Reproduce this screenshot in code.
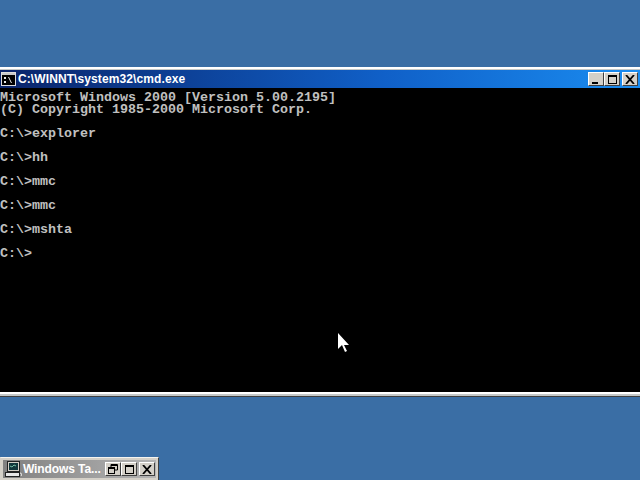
<script lang="ts">
  const lines = [
    'Microsoft Windows 2000 [Version 5.00.2195]',
    '(C) Copyright 1985-2000 Microsoft Corp.',
    '',
    'C:\\>explorer',
    '',
    'C:\\>hh',
    '',
    'C:\\>mmc',
    '',
    'C:\\>mmc',
    '',
    'C:\\>mshta',
    '',
    'C:\\>',
  ];
</script>

<div class="desktop">
  <section class="window">
    <header class="title">
      <svg class="cmd-icon" width="15" height="14" viewBox="0 0 15 14">
        <rect x="0.5" y="0.5" width="14" height="13" fill="#000" stroke="#dcdcdc" />
        <rect x="1" y="1" width="13" height="2" fill="#c8c8c8" />
        <path d="M3 5h2v2H3zM3 9h2v2H3zM7 5l1 0 3 6h-1z" fill="#e8e8e8" />
      </svg>
      <span class="caption">C:\WINNT\system32\cmd.exe</span>
      <div class="controls">
        <button class="btn" aria-label="Minimize"><i class="min"></i></button>
        <button class="btn" aria-label="Maximize"><i class="max"></i></button>
        <button class="btn gap" aria-label="Close">
          <svg width="10" height="9" viewBox="0 0 10 9"><path d="M1 0l8 9M9 0l-8 9" stroke="#000" stroke-width="1.8" /></svg>
        </button>
      </div>
    </header>
    <pre class="console">{lines.join('\n')}</pre>
    <div class="cursor">
      <svg width="11" height="19" viewBox="0 0 11 19">
        <path d="M0 0v16l4-4 3 7 2-1-3-6h5z" fill="#fff" />
      </svg>
    </div>
  </section>

  <div class="task">
    <div class="task-title">
      <svg class="task-icon" width="17" height="16" viewBox="0 0 17 16">
        <rect x="2.5" y="0.5" width="12" height="10" fill="#d4d0c8" stroke="#222" />
        <rect x="4" y="2" width="9" height="7" fill="#12383c" />
        <path d="M5 5l2 1 2-2 2 1" fill="none" stroke="#8fe0c0" stroke-width="0.8" />
        <rect x="0.5" y="11.5" width="14" height="4" fill="#e8e8e8" stroke="#222" />
        <path d="M15 12c2 0 2 2 1 3" fill="none" stroke="#eee" />
      </svg>
      <span class="task-label">Windows Ta...</span>
      <div class="task-controls">
        <button class="btn" aria-label="Restore">
          <svg width="10" height="10" viewBox="0 0 10 10">
            <path d="M3 3V.5h6.5V6H7M3 1.5h6" fill="none" stroke="#000" />
            <rect x="0.5" y="3.5" width="6" height="6" fill="none" stroke="#000" />
            <path d="M0 4.5h6" stroke="#000" />
          </svg>
        </button>
        <button class="btn" aria-label="Maximize"><i class="max"></i></button>
        <button class="btn gap" aria-label="Close">
          <svg width="10" height="9" viewBox="0 0 10 9"><path d="M1 0l8 9M9 0l-8 9" stroke="#000" stroke-width="1.8" /></svg>
        </button>
      </div>
    </div>
  </div>
</div>

<style>
  :global(body) {
    margin: 0;
    background: #3a6ea5;
  }
  .desktop {
    width: 640px;
    height: 480px;
    background: #3a6ea5;
    display: flex;
    flex-direction: column;
    justify-content: space-between;
    padding-top: 67px;
    box-sizing: border-box;
    overflow: hidden;
  }
  .window {
    position: relative;
    height: 330px;
    box-sizing: border-box;
    background: #c4c8c8;
    border-top: 2px solid #fff;
    border-bottom: 1px solid #404040;
    padding: 1px 0 2px;
    display: flex;
    flex-direction: column;
  }
  .title {
    height: 18px;
    flex: none;
    display: flex;
    align-items: center;
    background: linear-gradient(90deg, #0a246a 0, #1060c8 60%, #1a8cf0 100%);
    color: #fff;
    font: bold 12px/18px 'Liberation Sans', sans-serif;
  }
  .cmd-icon {
    margin: 0 2px 0 1px;
    flex: none;
  }
  .caption {
    flex: 1;
    letter-spacing: 0.1px;
  }
  .controls {
    display: flex;
    margin-right: 2px;
  }
  .btn {
    width: 16px;
    height: 14px;
    padding: 0;
    box-sizing: border-box;
    background: #d4d0c8;
    border: 1px solid;
    border-color: #fff #404040 #404040 #fff;
    display: flex;
    align-items: center;
    justify-content: center;
  }
  .gap {
    margin-left: 2px;
  }
  .min {
    display: block;
    width: 6px;
    height: 2px;
    background: #000;
    margin-top: 7px;
    margin-right: 3px;
  }
  .max {
    display: block;
    width: 9px;
    height: 9px;
    box-sizing: border-box;
    border: 1px solid #000;
    border-top-width: 2px;
  }
  .console {
    flex: 1;
    margin: 0;
    padding-top: 4px;
    background: #000;
    border-bottom: 2px solid #fff;
    color: #c0c0c0;
    font: bold 13.33px/12px 'Liberation Mono', monospace;
    overflow: hidden;
  }
  .cursor {
    position: absolute;
    left: 338px;
    top: 264px;
    line-height: 0;
  }
  .task {
    width: 159px;
    height: 23px;
    box-sizing: border-box;
    background: #d4d0c8;
    border-top: 1px solid #f4f4f0;
    border-left: 1px solid #d4d0c8;
    border-right: 1px solid #404040;
    padding: 2px;
  }
  .task-title {
    height: 18px;
    display: flex;
    align-items: center;
    background: linear-gradient(90deg, #808080, #b4b4b4);
    padding-left: 2px;
  }
  .task-icon {
    flex: none;
    margin-right: 1px;
  }
  .task-label {
    flex: 1;
    min-width: 0;
    color: #fff;
    font: bold 12px/18px 'Liberation Sans', sans-serif;
    white-space: nowrap;
    letter-spacing: -0.1px;
  }
  .task-controls {
    display: flex;
    margin-right: 1px;
  }
</style>
